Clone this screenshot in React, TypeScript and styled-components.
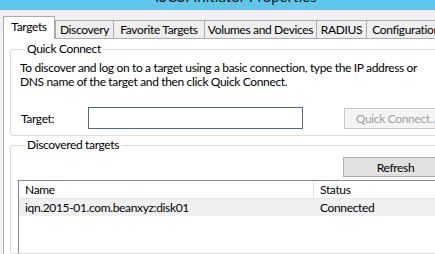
import styled, { createGlobalStyle } from 'styled-components';

const GlobalStyle = createGlobalStyle`
  html, body {
    margin: 0;
    padding: 0;
    background: #f0f0f0;
    overflow: hidden;
  }

  body {
    font-family: Lato, 'Noto Sans', sans-serif;
    font-size: 12px;
    letter-spacing: -0.35px;
    color: #000;
  }
`;

const tabs = [
  { label: 'Targets', width: 52 },
  { label: 'Discovery', width: 59 },
  { label: 'Favorite Targets', width: 92 },
  { label: 'Volumes and Devices', width: 113 },
  { label: 'RADIUS', width: 51 },
  { label: 'Configuration', width: 80 },
];

const App = () => {
  return (
    <>
      <GlobalStyle />
      <Viewport>
        <Window>
          <TitleBar>
            <TitleText>iSCSI Initiator Properties</TitleText>
          </TitleBar>
          <Body>
            <TabStrip>
              {tabs.map((tab, index) => (
                <Tab key={tab.label} $active={index === 0} $width={tab.width}>
                  {tab.label}
                </Tab>
              ))}
            </TabStrip>
            <Panel>
              <GroupBox>
                <Legend>Quick Connect</Legend>
                <Description>
                  To discover and log on to a target using a basic connection,
                  type the IP address or DNS name of the target and then click
                  Quick Connect.
                </Description>
                <TargetRow>
                  <Label>Target:</Label>
                  <TextInput type="text" />
                  <Spacer />
                  <Button disabled>Quick Connect...</Button>
                </TargetRow>
              </GroupBox>
              <GroupBox $grow>
                <Legend>Discovered targets</Legend>
                <ButtonRow>
                  <Button $short>Refresh</Button>
                </ButtonRow>
                <ListView>
                  <HeaderRow>
                    <HeaderCell $width={295}>Name</HeaderCell>
                    <HeaderCell>Status</HeaderCell>
                  </HeaderRow>
                  <ItemRow>
                    <Cell $width={295}>iqn.2015-01.com.beanxyz:disk01</Cell>
                    <Cell>Connected</Cell>
                  </ItemRow>
                </ListView>
              </GroupBox>
            </Panel>
          </Body>
        </Window>
      </Viewport>
    </>
  );
};

const Viewport = styled.div`
  width: 435px;
  height: 254px;
  overflow: hidden;
`;

const Window = styled.div`
  width: 472px;
  height: 254px;
  display: flex;
  flex-direction: column;
  background: #f0f0f0;
`;

const TitleBar = styled.div`
  height: 10px;
  flex-shrink: 0;
  display: flex;
  align-items: flex-end;
  justify-content: center;
  overflow: hidden;
  background: #5ec7ec;
`;

const TitleText = styled.div`
  flex-shrink: 0;
  font-size: 15px;
  line-height: 20px;
  margin-bottom: 4px;
  color: #1a1a1a;
  white-space: nowrap;
  letter-spacing: 0;
`;

const Body = styled.div`
  flex: 1;
  display: flex;
  flex-direction: column;
  padding: 7px 0 0 3px;
  min-height: 0;
`;

const TabStrip = styled.div`
  display: flex;
  align-items: flex-end;
  height: 22px;
  position: relative;
  z-index: 1;
  margin-bottom: -1px;
`;

const Tab = styled.div<{ $active?: boolean; $width: number }>`
  box-sizing: border-box;
  width: ${(p) => p.$width}px;
  height: ${(p) => (p.$active ? 23 : 19)}px;
  margin-left: ${(p) => (p.$active ? 0 : -1)}px;
  display: flex;
  align-items: center;
  justify-content: center;
  padding-bottom: ${(p) => (p.$active ? 3 : 0)}px;
  border: 1px solid #acacac;
  border-bottom: ${(p) => (p.$active ? 'none' : '1px solid #acacac')};
  background: ${(p) => (p.$active ? '#fff' : '#eeeeee')};
  white-space: nowrap;
  position: relative;
  z-index: ${(p) => (p.$active ? 2 : 1)};
  &:first-child + & {
    margin-left: 0;
  }
`;

const Panel = styled.div`
  flex: 1;
  display: flex;
  flex-direction: column;
  background: #fff;
  border: 1px solid #acacac;
  border-bottom: none;
  padding: 3px 0 0 6px;
  min-height: 0;
`;

const GroupBox = styled.fieldset<{ $grow?: boolean }>`
  margin: ${(p) => (p.$grow ? 2 : 0)}px 0 0 0;
  padding: 0 0 ${(p) => (p.$grow ? 0 : 6)}px 9px;
  border: 1px solid #dcdcdc;
  border-radius: 3px;
  display: flex;
  flex-direction: column;
  flex: ${(p) => (p.$grow ? 1 : 'none')};
  min-width: 0;
  width: 452px;
  box-sizing: border-box;
`;

const Legend = styled.legend`
  padding: 0 2px;
  margin-left: 5px;
  line-height: 14px;
`;

const Description = styled.p`
  margin: 5px 0 0 0;
  line-height: 14px;
  width: 420px;
`;

const TargetRow = styled.div`
  display: flex;
  align-items: center;
  margin-top: 18px;
  padding-right: 8px;
`;

const Label = styled.span`
  width: 67px;
  padding-left: 1px;
`;

const TextInput = styled.input`
  box-sizing: border-box;
  width: 215px;
  height: 22px;
  margin: 0;
  border: 1px solid #4d6a80;
  background: #fff;
  outline: none;
`;

const Spacer = styled.div`
  width: 41px;
`;

const Button = styled.button<{ $short?: boolean }>`
  box-sizing: border-box;
  width: 105px;
  height: ${(p) => (p.$short ? 20 : 21)}px;
  margin: 0;
  padding: 0;
  font: inherit;
  letter-spacing: inherit;
  color: #000;
  background: #e1e1e1;
  border: 1px solid #adadad;
  &:disabled {
    color: #a0a0a0;
    background: #f4f4f4;
    border-color: #c8c8c8;
  }
`;

const ButtonRow = styled.div`
  display: flex;
  padding-left: 323px;
  margin-top: 5px;
`;

const ListView = styled.div`
  margin-top: 3px;
  margin-left: -2px;
  flex: 1;
  border: 1px solid #828790;
  border-bottom: none;
  background: #fff;
`;

const HeaderRow = styled.div`
  display: flex;
  height: 17px;
  border-bottom: 1px solid #e5e5e5;
`;

const HeaderCell = styled.div<{ $width?: number }>`
  box-sizing: border-box;
  width: ${(p) => (p.$width ? `${p.$width}px` : 'auto')};
  flex: ${(p) => (p.$width ? 'none' : 1)};
  padding-left: 6px;
  line-height: 17px;
  border-right: ${(p) => (p.$width ? '1px solid #e5e5e5' : 'none')};
`;

const ItemRow = styled.div`
  display: flex;
  height: 17px;
  background: #f0f0f0;
`;

const Cell = styled.div<{ $width?: number }>`
  box-sizing: border-box;
  width: ${(p) => (p.$width ? `${p.$width}px` : 'auto')};
  flex: ${(p) => (p.$width ? 'none' : 1)};
  padding-left: 6px;
  line-height: 17px;
`;

export default App;
